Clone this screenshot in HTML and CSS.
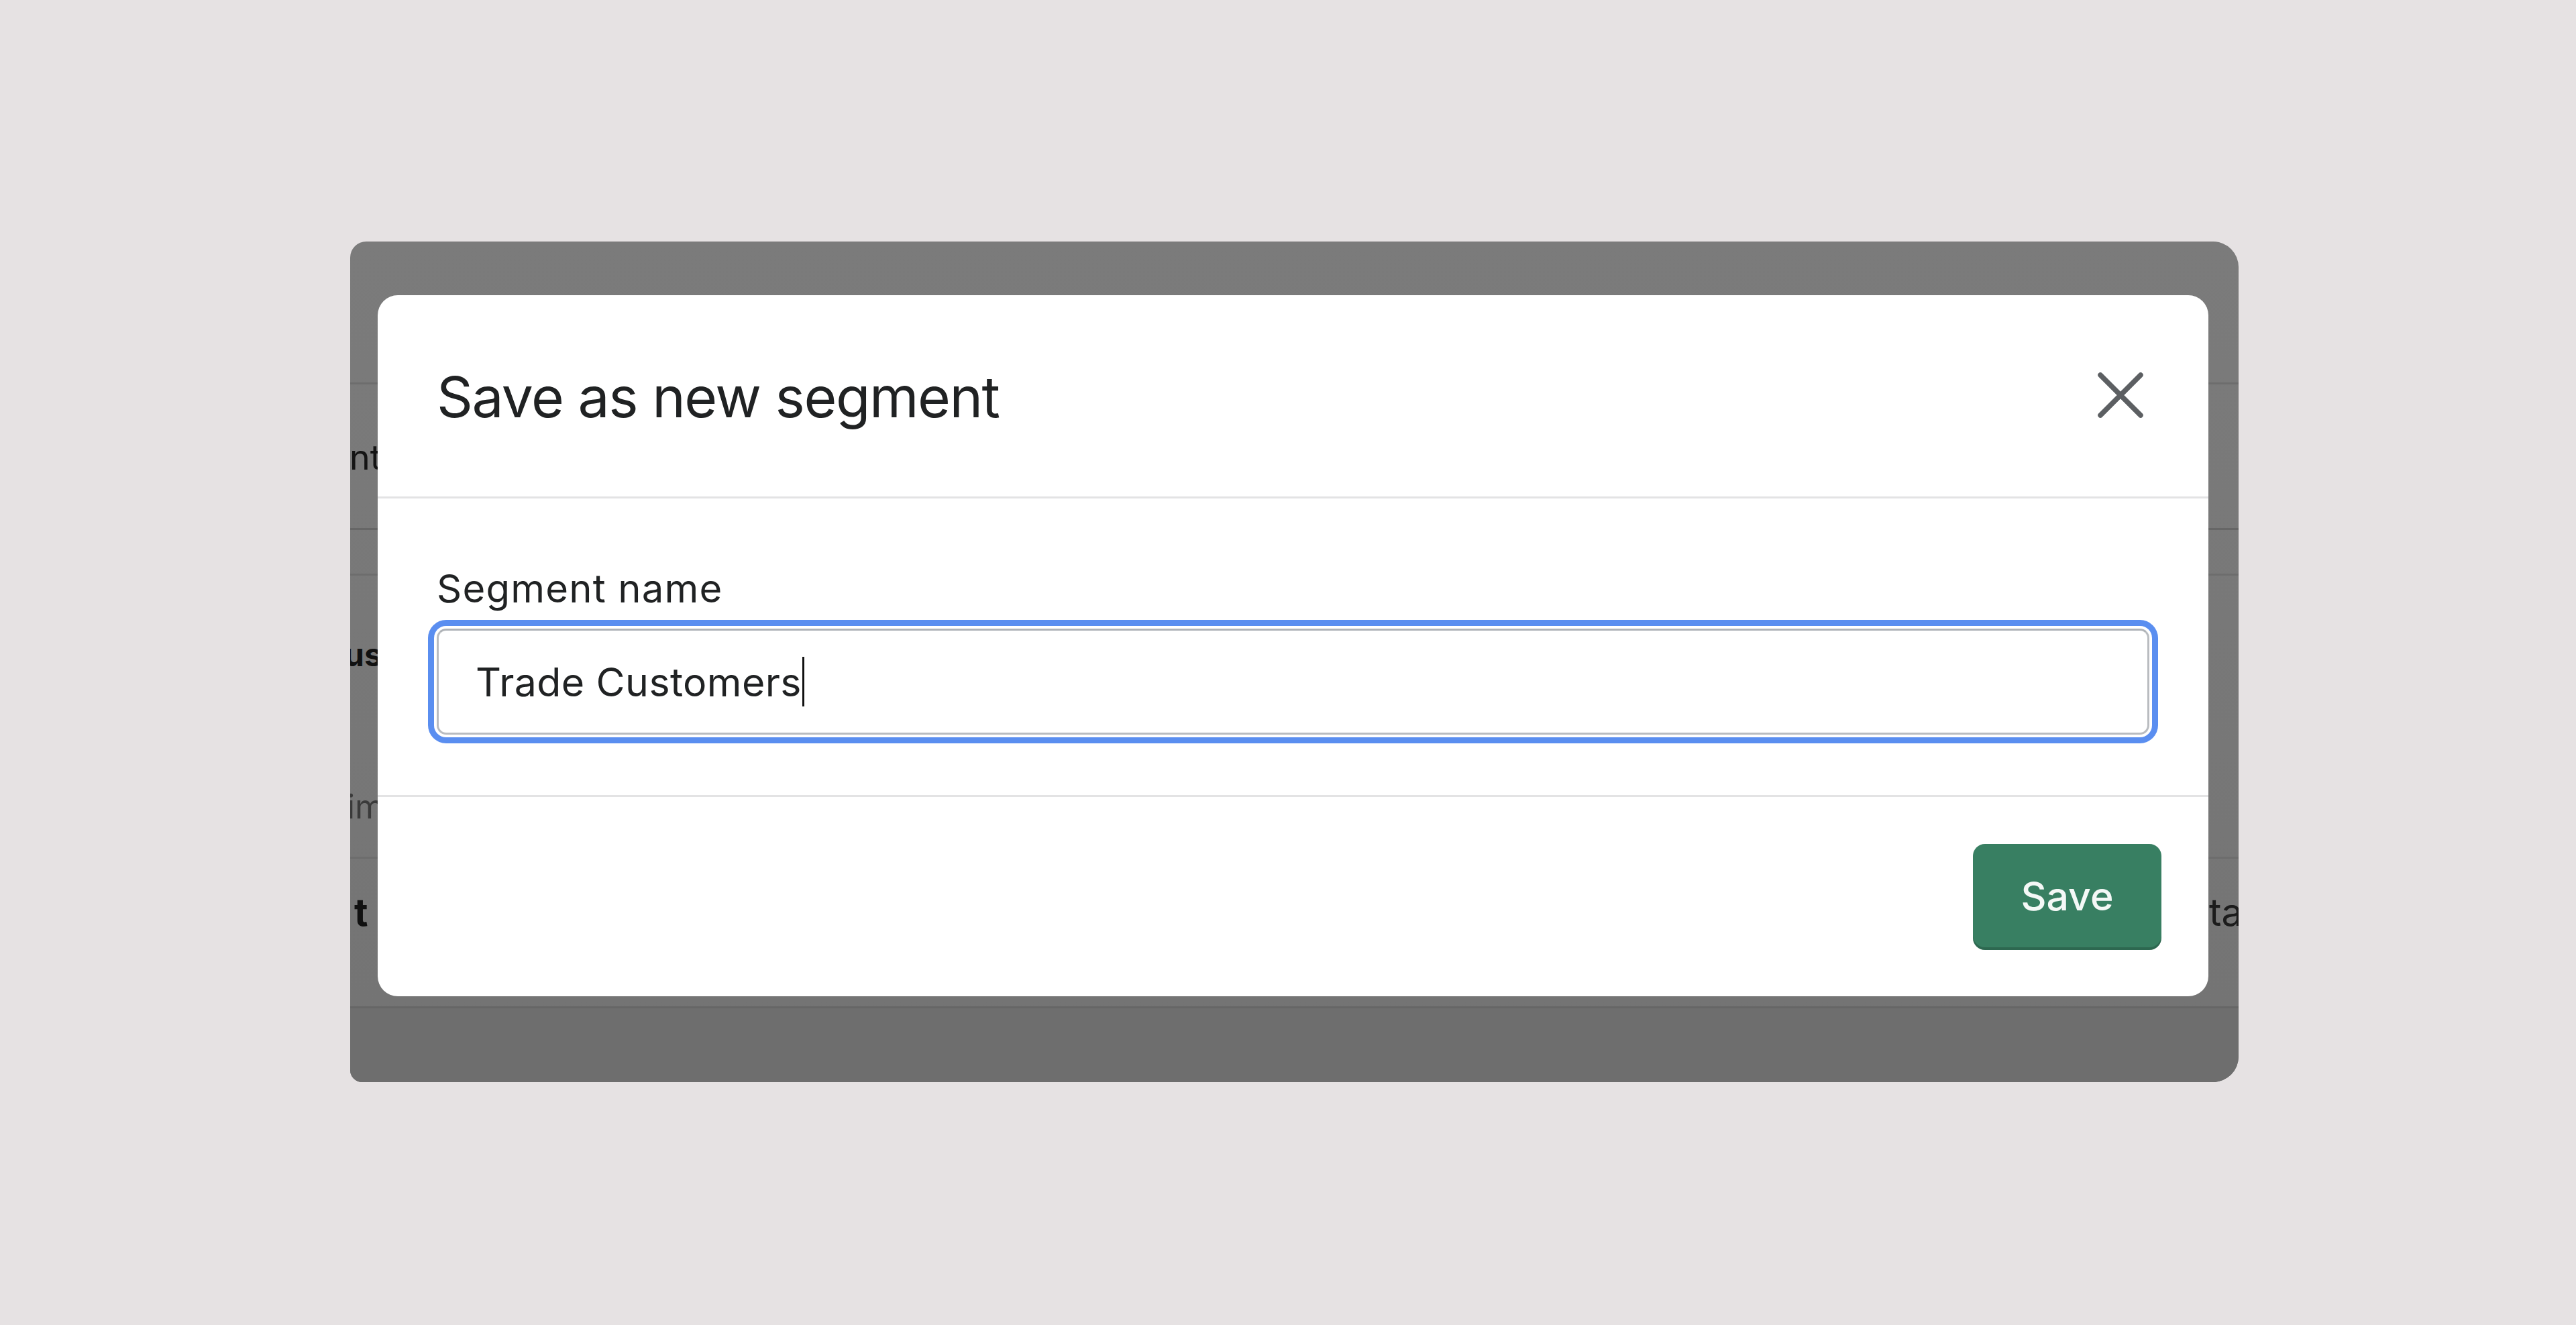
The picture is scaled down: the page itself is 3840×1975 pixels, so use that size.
FILE: index.html
```html
<!DOCTYPE html>
<html lang="en">
<head>
<meta charset="utf-8">
<title>Save as new segment</title>
<link rel="stylesheet" href="styles.css">
</head>
<body>
<div class="stage">
  <div class="panel">
    <div class="page">
      <div class="row r1"></div>
      <div class="row r2"><span class="bg-heading">nt</span></div>
      <div class="row r3"></div>
      <div class="row r4">
        <span class="bg-strong">us</span>
        <span class="bg-muted">im</span>
      </div>
      <div class="row r5">
        <span class="bg-strong big">t</span>
        <span class="bg-right"><span class="bg-regular">tatus</span></span>
      </div>
      <div class="row r6"></div>
    </div>

    <div class="modal" role="dialog" aria-labelledby="modal-title">
      <div class="modal-header">
        <h2 class="modal-title" id="modal-title">Save as new segment</h2>
        <button class="close-btn" type="button" aria-label="Close">
          <svg width="68" height="68" viewBox="0 0 68 68" aria-hidden="true">
            <path d="M4 4 L64 64 M64 4 L4 64" fill="none" stroke="#5c5f62" stroke-width="7.5" stroke-linecap="round"/>
          </svg>
        </button>
      </div>
      <div class="modal-body">
        <label class="field-label">Segment name</label>
        <div class="text-input">
          <span class="input-value">Trade Customers</span><span class="caret"></span>
        </div>
      </div>
      <div class="modal-footer">
        <button class="btn-primary" type="button">Save</button>
      </div>
    </div>
  </div>
</div>
</body>
</html>
```

FILE: styles.css
```css
* { box-sizing: border-box; }

html, body {
  margin: 0;
  padding: 0;
}

body {
  background: #e6e2e3;
  width: 3840px;
  height: 1975px;
  overflow: hidden;
  font-family: "Inter", "Noto Sans", sans-serif;
  color: #202223;
}

.stage {
  padding: 360px 0 0 522px;
}

.panel {
  position: relative;
  width: 2815px;
  height: 1253px;
  overflow: hidden;
  border-radius: 24px 38px 38px 18px;
  background: linear-gradient(180deg, #7b7b7b 0%, #777777 60%, #737373 100%);
}

/* dimmed page behind the modal */
.page {
  display: flex;
  flex-direction: column;
  height: 100%;
}

.row {
  border-bottom: 3px solid #6d6d6d;
  display: flex;
  flex-direction: column;
  align-items: flex-start;
  flex: none;
}

.r1 { height: 213px; }
.r2 { height: 217px; padding-top: 77px; border-bottom-color: #666666; }
.r3 { height: 68px; }
.r4 { height: 422px; padding-top: 88px; }
.r5 {
  height: 223px;
  padding-top: 46px;
  flex-direction: row;
  justify-content: space-between;
  align-items: flex-start;
  border-bottom-color: #666666;
}
.r6 {
  flex: 1;
  border-bottom: 0;
  background: #6e6e6e;
}

.bg-heading {
  font-size: 52px;
  line-height: normal;
  color: #141414;
  margin-left: -1px;
}

.bg-strong {
  font-size: 48px;
  font-weight: 700;
  line-height: normal;
  color: #111111;
  margin-left: -9px;
}

.bg-strong.big {
  font-size: 56px;
  margin-left: 6px;
}

.bg-muted {
  font-size: 50px;
  line-height: normal;
  color: #3a3a3a;
  margin-top: 167px;
  margin-left: -5px;
}

.bg-right {
  width: 44px;
  overflow: hidden;
  white-space: nowrap;
  flex: none;
}

.bg-regular {
  font-size: 56px;
  line-height: normal;
  color: #1c1c1c;
}

/* modal */
.modal {
  position: absolute;
  left: 41px;
  top: 80px;
  width: 2729px;
  height: 1045px;
  background: #ffffff;
  border-radius: 30px;
  display: flex;
  flex-direction: column;
  overflow: hidden;
}

.modal-header {
  height: 303px;
  padding: 3px 88px 0 88px;
  display: flex;
  align-items: center;
  justify-content: space-between;
  border-bottom: 3px solid #e3e3e4;
  flex: none;
}

.modal-title {
  margin: 0;
  font-size: 84px;
  font-weight: 400;
  line-height: normal;
  letter-spacing: -1.5px;
  color: #202223;
}

.close-btn {
  width: 86px;
  height: 86px;
  padding: 0;
  border: 0;
  background: transparent;
  display: flex;
  align-items: center;
  justify-content: center;
  margin-top: -6px;
}

.modal-body {
  height: 445px;
  padding: 94px 88px 0 88px;
  border-bottom: 3px solid #e3e3e4;
  display: flex;
  flex-direction: column;
  flex: none;
}

.field-label {
  font-size: 58px;
  line-height: 80px;
  letter-spacing: 1.2px;
  color: #202223;
}

.text-input {
  margin-top: 20px;
  height: 158px;
  border: 3px solid #b9bcc0;
  border-top-color: #aeb2b7;
  border-radius: 14px;
  background: #ffffff;
  padding-left: 55px;
  display: flex;
  align-items: center;
  box-shadow: 0 0 0 4px #ffffff, 0 0 0 13px #5a8ef0;
}

.input-value {
  font-size: 59px;
  line-height: normal;
  color: #202223;
  letter-spacing: 0.4px;
}

.caret {
  width: 3px;
  height: 74px;
  background: #111111;
  margin-left: 1px;
}

.modal-footer {
  flex: 1;
  padding: 0 70px;
  display: flex;
  align-items: center;
  justify-content: flex-end;
}

.btn-primary {
  width: 281px;
  height: 158px;
  border: 0;
  border-radius: 18px;
  background: #387f62;
  color: #f4f8f6;
  font-family: "Inter", "Noto Sans", sans-serif;
  font-size: 59px;
  font-weight: 500;
  box-shadow: inset 0 -4px 0 rgba(0, 0, 0, 0.18);
  padding: 0 0 2px 0;
}
```
